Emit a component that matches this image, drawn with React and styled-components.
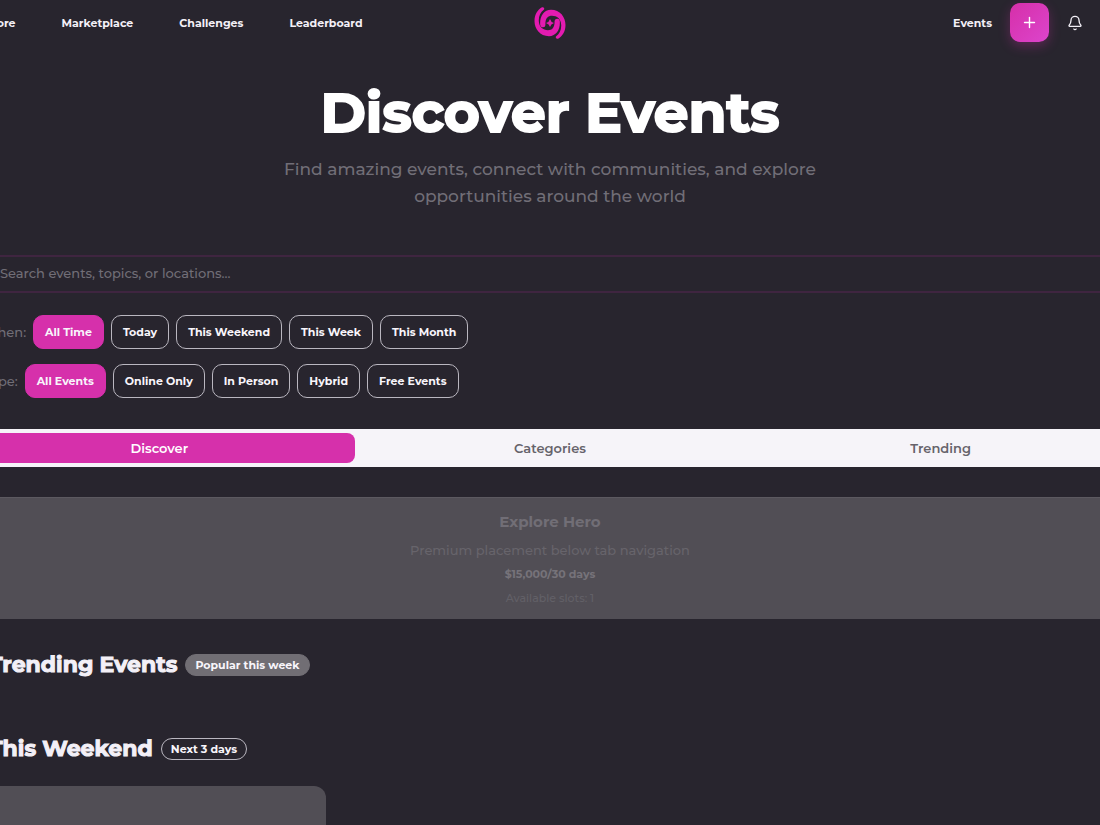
import React, { useState } from "react";
import styled, { createGlobalStyle } from "styled-components";
import { Bell, Calendar, Clock, Filter, Plus, TrendingUp } from "lucide-react";

const whenOptions = [
  "All Time",
  "Today",
  "This Weekend",
  "This Week",
  "This Month"
];
const typeOptions = [
  "All Events",
  "Online Only",
  "In Person",
  "Hybrid",
  "Free Events"
];
const tabs = ["Discover", "Categories", "Trending"];

// one arm of the swirl, the other one is the same turned around
const arm =
  "M-9.8 2C-10.500-6-6.500-13.200 1-13.200C10-13.200 15.500-6 15.500 2C15.500 8.500 12.500 13 8.500 15.500C6.800 16.500 4.800 14.600 6.200 13.300C9.600 10.500 11.400 7 11.200 2C11-4 7-7.200 2-7.200C-2-7.200-4.600-5-4.600 1.500A2.600 2.600 0 0 1-9.800 2Z";

const Logo = () => (
  <svg width="32" height="32" viewBox="-16 -16 32 32" fill="#e31bb0">
    <path d={arm} />
    <path d={arm} transform="rotate(180)" />
    <path d="M0-4Q.8-.8 4 0Q.8.8 0 4Q-.8.8-4 0Q-.8-.8 0-4Z" />
  </svg>
);

const FilterRow = ({ icon, label, options }) => {
  const [active, setActive] = useState(options[0]);
  return (
    <Filters role="group" aria-label={label}>
      <FilterLabel>
        {icon}
        {label}:
      </FilterLabel>
      {options.map(item => (
        <Chip
          key={item}
          type="button"
          $active={item === active}
          onClick={() => setActive(item)}
        >
          {item}
        </Chip>
      ))}
    </Filters>
  );
};

const App = () => {
  const [tab, setTab] = useState(tabs[0]);
  const [val, setVal] = useState("");

  return (
    <Page>
      <GlobalStyle />
      <Header>
        <Nav>
          <NavLink href="#explore">Explore</NavLink>
          <NavLink href="#marketplace">Marketplace</NavLink>
          <NavLink href="#challenges">Challenges</NavLink>
          <NavLink href="#leaderboard">Leaderboard</NavLink>
        </Nav>
        <LogoLink href="#home" aria-label="Home">
          <Logo />
        </LogoLink>
        <Actions>
          <NavLink href="#events">Events</NavLink>
          <CreateButton type="button" aria-label="Create">
            <Plus size={17} />
          </CreateButton>
          <BellButton type="button" aria-label="Notifications">
            <Bell size={16} />
          </BellButton>
        </Actions>
      </Header>
      <Main>
        <Intro>
          <h1>Discover Events</h1>
          <p>
            Find amazing events, connect with communities, and explore
            opportunities around the world
          </p>
        </Intro>
        <Search
          type="text"
          aria-label="Search events"
          placeholder="Search events, topics, or locations..."
          value={val}
          onChange={e => setVal(e.target.value)}
        />
        <FilterList>
          <FilterRow
            icon={<Clock size={16} />}
            label="When"
            options={whenOptions}
          />
          <FilterRow
            icon={<Filter size={16} />}
            label="Type"
            options={typeOptions}
          />
        </FilterList>
        <TabBar role="tablist">
          {tabs.map(item => (
            <Tab
              key={item}
              type="button"
              role="tab"
              aria-selected={item === tab}
              $active={item === tab}
              onClick={() => setTab(item)}
            >
              {item}
            </Tab>
          ))}
        </TabBar>
        <Placement>
          <h3>Explore Hero</h3>
          <p className="about">Premium placement below tab navigation</p>
          <p className="price">$15,000/30 days</p>
          <p className="slots">Available slots: 1</p>
        </Placement>
        <Section>
          <SectionTitle>
            <TrendingUp size={24} />
            Trending Events
          </SectionTitle>
          <Badge $filled>Popular this week</Badge>
        </Section>
        <Section>
          <SectionTitle>
            <Calendar size={24} />
            This Weekend
          </SectionTitle>
          <Badge>Next 3 days</Badge>
        </Section>
        <EventCard />
      </Main>
    </Page>
  );
};

export default App;

const GlobalStyle = createGlobalStyle`
  * {
    box-sizing: border-box;
  }
  body {
    margin: 0;
    background: #28252e;
    color: #f3f0f7;
    font-family: Montserrat, Inter, "Liberation Sans", sans-serif;
  }
  h1, h2, h3, p {
    margin: 0;
  }
  button, input {
    font-family: inherit;
  }
`;

const Page = styled.div`
  height: 100vh;
  overflow: hidden;
`;

const Header = styled.header`
  display: grid;
  grid-template-columns: 1fr auto 1fr;
  align-items: center;
  height: 45px;
  margin: 0 -28px;
`;

const Nav = styled.nav`
  display: flex;
  gap: 46px;
`;

const NavLink = styled.a`
  color: #f3f0f7;
  font-size: 11px;
  font-weight: 700;
  line-height: 16px;
  text-decoration: none;
`;

const LogoLink = styled.a`
  display: flex;
`;

const Actions = styled.div`
  display: flex;
  align-items: center;
  justify-content: flex-end;
  gap: 18px;
  padding-right: 45px;
`;

const CreateButton = styled.button`
  display: flex;
  align-items: center;
  justify-content: center;
  width: 39px;
  height: 39px;
  padding: 0;
  border: 0;
  border-radius: 10px;
  background: linear-gradient(135deg, #d62fa9, #dc45cc);
  box-shadow: 0 4px 12px rgba(214, 48, 171, 0.3);
  color: #fff;
`;

const BellButton = styled.button`
  display: flex;
  padding: 0;
  border: 0;
  background: none;
  color: #f3f0f7;
`;

const Main = styled.main`
  margin: 0 -40px;
`;

const Intro = styled.div`
  padding: 36px 0 45px;
  text-align: center;
  h1 {
    color: #fff;
    font-size: 55px;
    font-weight: 700;
    line-height: 64px;
    -webkit-text-stroke: 2px #fff;
  }
  p {
    max-width: 560px;
    margin: 11px auto 0;
    color: #716e77;
    font-size: 17px;
    font-weight: 500;
    line-height: 27px;
  }
`;

const Search = styled.input`
  display: block;
  width: 100%;
  height: 38px;
  padding: 0 38px 2px;
  border: 2px solid #3f2540;
  border-radius: 10px;
  outline: none;
  background: #28252e;
  color: #f3f0f7;
  font-size: 13px;
  font-weight: 500;
  &::placeholder {
    color: #716e77;
    opacity: 1;
  }
`;

const FilterList = styled.div`
  display: flex;
  flex-direction: column;
  gap: 15px;
  margin: 22px 0 31px;
`;

const Filters = styled.div`
  display: flex;
  gap: 7px;
`;

const FilterLabel = styled.span`
  display: flex;
  align-items: center;
  gap: 7px;
  color: #716e77;
  font-size: 13px;
  font-weight: 500;
`;

const Chip = styled.button`
  height: 34px;
  padding: 0 11px;
  border: 1px solid ${props => (props.$active ? "#d630ab" : "#bab7c0")};
  border-radius: 10px;
  background: ${props => (props.$active ? "#d630ab" : "transparent")};
  color: #f8f5fb;
  font-size: 11px;
  font-weight: 700;
`;

const TabBar = styled.div`
  display: grid;
  grid-template-columns: repeat(3, 1fr);
  padding: 4px;
  border-radius: 10px;
  background: #f6f4f9;
`;

const Tab = styled.button`
  height: 30px;
  border: 0;
  border-radius: 8px;
  background: ${props => (props.$active ? "#d630ab" : "transparent")};
  color: ${props => (props.$active ? "#fff" : "#66636b")};
  font-size: 13px;
  font-weight: 600;
`;

const Placement = styled.section`
  margin: 30px 0 34px;
  padding: 14px 0 13px;
  border-top: 1px solid #5c5960;
  background: #514e55;
  text-align: center;
  h3 {
    color: #716e76;
    font-size: 15px;
    font-weight: 700;
    line-height: 20px;
  }
  .about {
    margin-top: 8px;
    color: #67646b;
    font-size: 13px;
    font-weight: 500;
    line-height: 20px;
  }
  .price {
    margin-top: 6px;
    color: #76737a;
    font-size: 11px;
    font-weight: 700;
    line-height: 16px;
  }
  .slots {
    margin-top: 8px;
    color: #626067;
    font-size: 11px;
    font-weight: 500;
    line-height: 16px;
  }
`;

const Section = styled.div`
  display: flex;
  align-items: center;
  gap: 8px;
  height: 24px;
  margin-bottom: 60px;
  &:last-of-type {
    margin-bottom: 25px;
  }
`;

const SectionTitle = styled.h2`
  display: flex;
  align-items: center;
  gap: 5px;
  font-size: 22px;
  font-weight: 700;
  line-height: 24px;
  -webkit-text-stroke: 1px #f3f0f7;
`;

const Badge = styled.span`
  padding: 2px 9px;
  border: 1px solid ${props => (props.$filled ? "#716e74" : "#bab7c0")};
  border-radius: 11px;
  background: ${props => (props.$filled ? "#716e74" : "transparent")};
  color: #f8f5fb;
  font-size: 11px;
  font-weight: 700;
  line-height: 16px;
`;

const EventCard = styled.article`
  width: 31%;
  height: 240px;
  border-radius: 12px;
  background: #514e55;
`;
